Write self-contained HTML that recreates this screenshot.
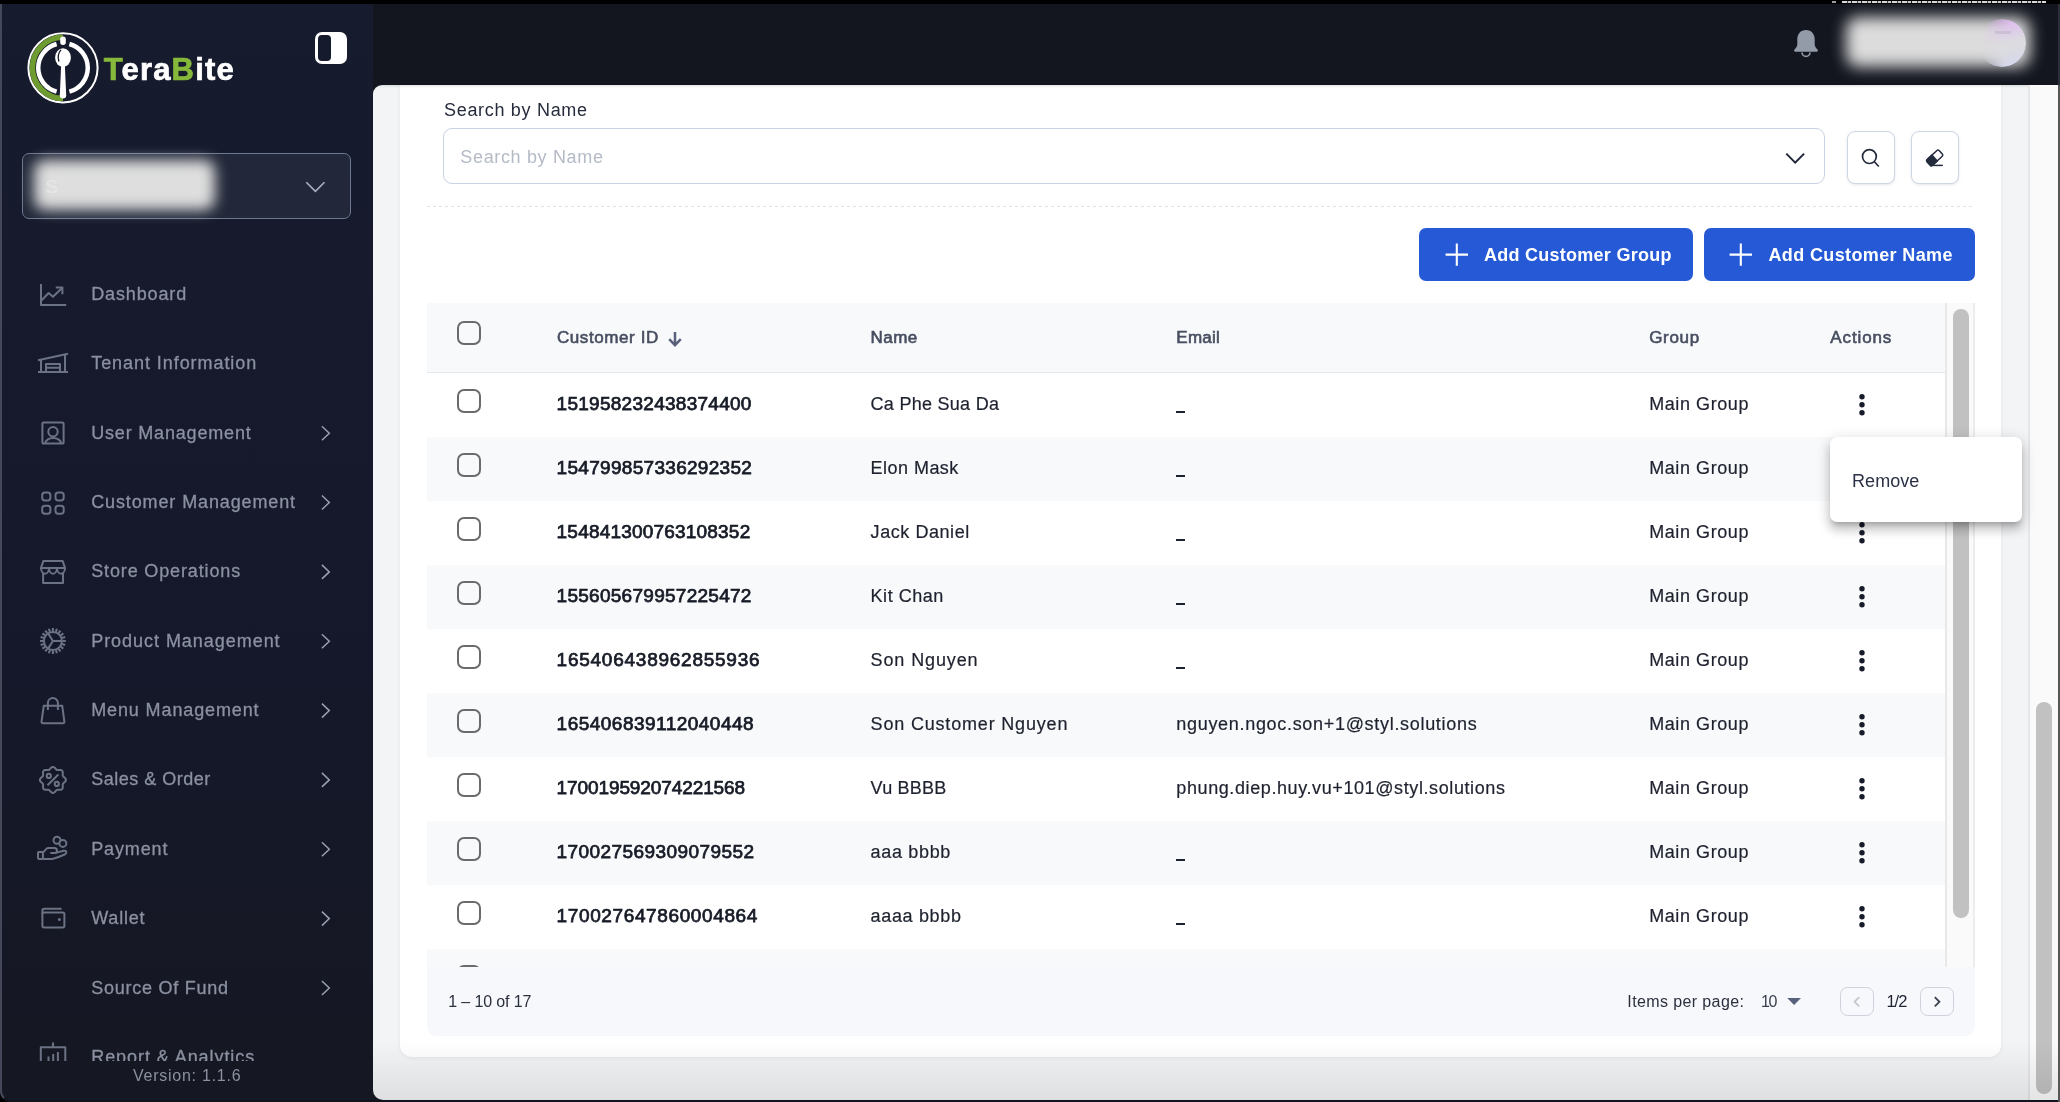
<!DOCTYPE html>
<html lang="en">
<head>
<meta charset="utf-8">
<title>TeraBite - Customer Management</title>
<style>
*{box-sizing:border-box;margin:0;padding:0}
html,body{width:2060px;height:1102px;overflow:hidden;background:#000}
body{font-family:"Liberation Sans",sans-serif;position:relative;color:#1c2233;font-size:16px;line-height:20px}
.a{position:absolute;display:block}
.t{position:absolute;display:block;white-space:nowrap;overflow:visible}
svg{overflow:visible}
#root{position:absolute;left:0;top:0;width:2060px;height:1102px;will-change:transform}

</style>
</head>
<body>
<div id="root">
<div class="a" style="left:0px;top:4px;width:2060px;height:1098px;background:#13161f;border-radius:0 0 0 11px;"></div>
<div class="a" style="left:0px;top:4px;width:373px;height:1098px;background:linear-gradient(to bottom,#161b2e 0%,#161a2c 25%,#15182a 60%,#151722 100%);border-radius:0 0 0 11px;"></div>
<svg class="a" style="left:24px;top:28px;" width="80" height="80" viewBox="24 28 80 80">
<circle cx="63" cy="67.8" r="34.6" fill="none" stroke="#fff" stroke-width="2"/>
<path d="M63 37.2 A30.6 30.6 0 0 0 63 98.4" fill="none" stroke="#6f9c30" stroke-width="5.6"/>
<path d="M56.6 44.0 A24.6 24.6 0 0 0 56.6 91.6" fill="none" stroke="#fff" stroke-width="4.5"/>
<path d="M69.4 44.0 A24.6 24.6 0 0 1 69.4 91.6" fill="none" stroke="#fff" stroke-width="4.5"/>
<rect x="60.2" y="36.6" width="5.6" height="8.3" rx="2.7" fill="#fff"/>
<ellipse cx="63" cy="57.6" rx="7.9" ry="9.4" fill="#fff"/>
<path d="M61.2 64 L59.8 95.2 Q59.8 98.4 63 98.4 Q66.2 98.4 66.2 95.2 L64.8 64 Z" fill="#fff"/>
<path d="M60.8 50.2 Q57 54.6 58.8 61" fill="none" stroke="#161a2d" stroke-width="1.3" stroke-linecap="round"/>
</svg>
<div class="t" style="left:103.7px;top:50.3px;font-size:31px;line-height:39px;height:39px;font-weight:700;letter-spacing:1.18px;color:#fff;-webkit-text-stroke:0.7px currentColor"><span style="color:#86b83a;-webkit-text-stroke:0.7px #86b83a">T</span>era<span style="color:#86b83a;-webkit-text-stroke:0.7px #86b83a">B</span>ite</div>
<div class="a" style="left:315px;top:32px;width:32px;height:32px;background:#fff;border-radius:7px;"></div>
<div class="a" style="left:318.3px;top:35.2px;width:12.7px;height:25.6px;background:#161a2d;border-radius:4px;"></div>
<div class="a" style="left:22px;top:153px;width:329px;height:65.5px;background:#222839;border:1px solid #6c7890;border-radius:7px;"></div>
<div class="a" style="left:33.5px;top:159.5px;width:181px;height:50px;background:#dedede;border-radius:11px;filter:blur(7px);"></div>
<div class="t" style="left:45.5px;top:174.8px;font-size:19px;line-height:24px;height:24px;color:#e7e7e7;filter:blur(.5px);">S</div>
<svg class="a" style="left:300px;top:176px;" width="30" height="22" viewBox="300 176 30 22"><path d="M306.3 182.3 L315.4 191.4 L324.5 182.3" fill="none" stroke="#a9b0bf" stroke-width="1.6"/></svg>
<div class="a" style="left:0;top:0;width:373px;height:1060.6px;overflow:hidden"><div class="t" style="left:91.2px;top:283.0px;font-size:18px;line-height:22px;height:22px;color:#8b91a1;letter-spacing:0.87px;-webkit-text-stroke:0.3px #8b91a1;">Dashboard</div><div class="t" style="left:91.2px;top:352.4px;font-size:18px;line-height:22px;height:22px;color:#8b91a1;letter-spacing:0.94px;-webkit-text-stroke:0.3px #8b91a1;">Tenant Information</div><div class="t" style="left:91.2px;top:421.7px;font-size:18px;line-height:22px;height:22px;color:#8b91a1;letter-spacing:0.82px;-webkit-text-stroke:0.3px #8b91a1;">User Management</div><div class="t" style="left:91.2px;top:491.0px;font-size:18px;line-height:22px;height:22px;color:#8b91a1;letter-spacing:0.88px;-webkit-text-stroke:0.3px #8b91a1;">Customer Management</div><div class="t" style="left:91.2px;top:560.4px;font-size:18px;line-height:22px;height:22px;color:#8b91a1;letter-spacing:0.86px;-webkit-text-stroke:0.3px #8b91a1;">Store Operations</div><div class="t" style="left:91.2px;top:629.8px;font-size:18px;line-height:22px;height:22px;color:#8b91a1;letter-spacing:0.96px;-webkit-text-stroke:0.3px #8b91a1;">Product Management</div><div class="t" style="left:91.2px;top:699.1px;font-size:18px;line-height:22px;height:22px;color:#8b91a1;letter-spacing:0.88px;-webkit-text-stroke:0.3px #8b91a1;">Menu Management</div><div class="t" style="left:91.2px;top:768.4px;font-size:18px;line-height:22px;height:22px;color:#8b91a1;letter-spacing:0.50px;-webkit-text-stroke:0.3px #8b91a1;">Sales &amp; Order</div><div class="t" style="left:91.2px;top:837.8px;font-size:18px;line-height:22px;height:22px;color:#8b91a1;letter-spacing:0.88px;-webkit-text-stroke:0.3px #8b91a1;">Payment</div><div class="t" style="left:91.2px;top:907.1px;font-size:18px;line-height:22px;height:22px;color:#8b91a1;letter-spacing:0.81px;-webkit-text-stroke:0.3px #8b91a1;">Wallet</div><div class="t" style="left:91.2px;top:976.5px;font-size:18px;line-height:22px;height:22px;color:#8b91a1;letter-spacing:0.76px;-webkit-text-stroke:0.3px #8b91a1;">Source Of Fund</div><div class="t" style="left:91.2px;top:1045.8px;font-size:18px;line-height:22px;height:22px;color:#8b91a1;letter-spacing:0.94px;-webkit-text-stroke:0.3px #8b91a1;">Report &amp; Analytics</div><svg class="a" style="left:0px;top:240px;" width="373" height="821" viewBox="0 240 373 821">
<g fill="none" stroke="#6b7284" stroke-width="2" stroke-linejoin="round">
<!-- dashboard -->
<path d="M41 284 V305 H66.2"/><path d="M41.6 300.4 L48.6 293 L53 296.7 L61.8 288.2"/><path d="M55.8 287.6 H62.4 V294.2"/>
<!-- tenant -->
<path d="M38 360.2 L68 353.7"/><path d="M41 359.6 V372 M65 354.4 V372 M38 372 H68"/><path d="M46 372 V364 H60 V372 M46 367.8 H60"/>
<!-- user -->
<rect x="42.4" y="422.4" width="21.2" height="21.2" rx="1.2"/><circle cx="53" cy="431.8" r="4.7"/><path d="M45.2 443.6 A7.95 5.6 0 0 1 61.1 443.6"/>
<!-- grid -->
<rect x="42.2" y="492.5" width="8.2" height="8" rx="2.7"/><rect x="55.5" y="492.5" width="8.2" height="8" rx="2.7"/>
<rect x="42.2" y="505.7" width="8.2" height="8" rx="2.7"/><rect x="55.5" y="505.7" width="8.2" height="8" rx="2.7"/>
<!-- store -->
<path d="M43.4 560.9 H62.6 L65 567.9 H41 Z"/>
<path d="M41 568 a4 5.7 0 0 0 8 0 a4 5.7 0 0 0 8 0 a4 5.7 0 0 0 8 0"/>
<path d="M43.1 572.6 V583 H63 V572.6"/>
<!-- gear -->
<circle cx="52.9" cy="641" r="9"/><path d="M62.50 641.00 L65.80 641.00 M62.03 643.97 L65.17 644.99 M60.67 646.64 L63.34 648.58 M58.54 648.77 L60.48 651.44 M55.87 650.13 L56.89 653.27 M52.90 650.60 L52.90 653.90 M49.93 650.13 L48.91 653.27 M47.26 648.77 L45.32 651.44 M45.13 646.64 L42.46 648.58 M43.77 643.97 L40.63 644.99 M43.30 641.00 L40.00 641.00 M43.77 638.03 L40.63 637.01 M45.13 635.36 L42.46 633.42 M47.26 633.23 L45.32 630.56 M49.93 631.87 L48.91 628.73 M52.90 631.40 L52.90 628.10 M55.87 631.87 L56.89 628.73 M58.54 633.23 L60.48 630.56 M60.67 635.36 L63.34 633.42 M62.03 638.03 L65.17 637.01 " stroke-width="2.1"/>
<path d="M52.9 641 H61.9 M52.9 641 L48.1 633.4 M52.9 641 L48.1 648.6"/>
<!-- bag -->
<path d="M43.8 705.7 H62.2 L64.4 721.8 a1.4 1.4 0 0 1 -1.4 1.5 H42.9 a1.4 1.4 0 0 1 -1.4 -1.5 Z"/>
<path d="M47.9 710 V703 a5 5 0 0 1 10 0 V710"/>
<!-- sales -->
<polygon points="52.90,766.85 54.01,767.17 55.00,767.98 55.83,768.96 56.60,769.73 57.47,770.09 58.56,770.09 59.84,769.99 61.12,770.11 62.13,770.67 62.69,771.68 62.81,772.96 62.71,774.24 62.71,775.33 63.07,776.20 63.84,776.97 64.82,777.80 65.63,778.79 65.95,779.90 65.63,781.01 64.82,782.00 63.84,782.83 63.07,783.60 62.71,784.47 62.71,785.56 62.81,786.84 62.69,788.12 62.13,789.13 61.12,789.69 59.84,789.81 58.56,789.71 57.47,789.71 56.60,790.07 55.83,790.84 55.00,791.82 54.01,792.63 52.90,792.95 51.79,792.63 50.80,791.82 49.97,790.84 49.20,790.07 48.33,789.71 47.24,789.71 45.96,789.81 44.68,789.69 43.67,789.13 43.11,788.12 42.99,786.84 43.09,785.56 43.09,784.47 42.73,783.60 41.96,782.83 40.98,782.00 40.17,781.01 39.85,779.90 40.17,778.79 40.98,777.80 41.96,776.97 42.73,776.20 43.09,775.33 43.09,774.24 42.99,772.96 43.11,771.68 43.67,770.67 44.68,770.11 45.96,769.99 47.24,770.09 48.33,770.09 49.20,769.73 49.97,768.96 50.80,767.98 51.79,767.17"/><path d="M47.5 785.3 L58.4 774.5"/><circle cx="48.8" cy="775.9" r="2.1"/><circle cx="56.8" cy="783.9" r="2.1"/>
<!-- payment -->
<rect x="38" y="852.1" width="4.9" height="6.8" rx="0.8"/>
<path d="M42.9 852.6 L46.6 848.6 Q47.3 847.9 48.5 847.9 H54.4 Q57 848 57 850.4 Q57 853 54.6 853 H50.3"/>
<path d="M56.6 852.6 L63.6 850.7 Q66 850.3 66.3 852.2 Q66.4 853.6 64.6 854.5 Q57.6 857.8 52.3 858.9 H42.9"/>
<circle cx="57" cy="840.3" r="3.5"/><circle cx="62.85" cy="843.4" r="3.5" fill="#151826"/>
<!-- wallet -->
<rect x="42.4" y="912.5" width="22" height="14.9" rx="1.6"/><path d="M42.4 914 V910.5 a1.8 1.8 0 0 1 1.8 -1.8 H61.6"/>
<circle cx="59.4" cy="919.6" r="1.5" fill="#6b7284" stroke="none"/>
<!-- report -->
<path d="M40.8 1062 V1047.3 H65.3 V1062 M53 1042.6 V1047.3"/>
<path d="M48.5 1062 V1056.6 M53.2 1062 V1054 M57.9 1062 V1052" stroke-width="2"/>
</g>
<g fill="none" stroke="#98a0af" stroke-width="1.5"><path d="M321.9 426.2 L329.3 433.2 L321.9 440.2" /><path d="M321.9 495.5 L329.3 502.5 L321.9 509.5" /><path d="M321.9 564.9 L329.3 571.9 L321.9 578.9" /><path d="M321.9 634.2 L329.3 641.2 L321.9 648.2" /><path d="M321.9 703.6 L329.3 710.6 L321.9 717.6" /><path d="M321.9 772.9 L329.3 779.9 L321.9 786.9" /><path d="M321.9 842.3 L329.3 849.3 L321.9 856.3" /><path d="M321.9 911.6 L329.3 918.6 L321.9 925.6" /><path d="M321.9 981.0 L329.3 988.0 L321.9 995.0" /></g>
</svg></div>
<div class="t" style="left:133.0px;top:1065.6px;font-size:16px;line-height:20px;height:20px;color:#8b91a1;letter-spacing:0.75px;">Version: 1.1.6</div>
<svg class="a" style="left:1790px;top:26px;" width="32" height="34" viewBox="1790 26 32 34"><path d="M1806 30 c-5.6 0 -8.7 4.3 -8.7 9.3 v5.2 c0 1.9 -1.2 3.3 -2.6 4.7 c-1.2 1.2 -0.6 2.6 0.8 2.6 h21 c1.4 0 2 -1.4 0.8 -2.6 c-1.4 -1.4 -2.6 -2.8 -2.6 -4.7 v-5.2 c0 -5 -3.1 -9.3 -8.7 -9.3 z" fill="#939aa8"/>
<path d="M1802 52.4 a4 4 0 0 0 8 0" fill="none" stroke="#939aa8" stroke-width="1.7"/></svg>
<div class="a" style="left:1846px;top:16.5px;width:184px;height:50.5px;background:#dcdcdc;border-radius:12px;filter:blur(7.5px);"></div>
<div class="a" style="left:1978.4px;top:18.9px;width:48px;height:48px;border-radius:50%;background:linear-gradient(165deg,#e3aaf3 0%,#dfc6ec 28%,#dcdce0 52%,#dadae3 72%,#d3d6f0 100%);-webkit-mask-image:linear-gradient(100deg,rgba(0,0,0,0) 12%,rgba(0,0,0,1) 62%);mask-image:linear-gradient(100deg,rgba(0,0,0,0) 12%,rgba(0,0,0,1) 62%)"></div>
<div class="a" style="left:1995px;top:30.5px;width:16px;height:3.5px;background:rgba(120,120,125,.16);filter:blur(.6px);"></div>
<div class="a" style="left:1842px;top:1px;width:204px;height:2.4px;background:repeating-linear-gradient(to right,#fff 0,#fff 5px,#555 5px,#555 6px,#eee 6px,#eee 9px,#222 9px,#222 10px);opacity:.85;"></div>
<div class="a" style="left:1832px;top:0.5px;width:4px;height:2.5px;background:#ddd;opacity:.7;"></div>
<div class="a" style="left:373px;top:85px;width:1685px;height:1015px;background:#f3f4f6;border-radius:9px 0 0 10px;"></div>
<div class="a" style="left:2028px;top:85px;width:30px;height:1015px;background:#fafafa;border-left:2px solid #e6e6e6;"></div>
<div class="a" style="left:2036px;top:702px;width:16px;height:392.2px;background:#c1c1c1;border-radius:8px;"></div>
<div class="a" style="left:400px;top:85px;width:1601px;height:972px;background:#fff;border-radius:0 0 12px 12px;box-shadow:0 1px 4px rgba(30,40,70,.07);"></div>
<div class="a" style="left:373px;top:85px;width:1655px;height:3px;background:linear-gradient(to bottom,rgba(0,0,0,.10),rgba(0,0,0,0));border-radius:9px 0 0 0;"></div>
<div class="t" style="left:444.0px;top:98.6px;font-size:18px;line-height:22px;height:22px;color:#262c3c;letter-spacing:0.69px;">Search by Name</div>
<div class="a" style="left:443px;top:128px;width:1382px;height:55.5px;border:1px solid #c9d1e2;border-radius:9px;background:#fff;"></div>
<div class="t" style="left:460.3px;top:146.0px;font-size:18px;line-height:22px;height:22px;color:#b4bbc7;letter-spacing:0.66px;">Search by Name</div>
<svg class="a" style="left:1780px;top:148px;" width="30" height="20" viewBox="1780 148 30 20"><path d="M1786.3 153.6 L1795.2 162.6 L1804.1 153.6" fill="none" stroke="#1f2738" stroke-width="2"/></svg>
<div class="a" style="left:1847.4px;top:131px;width:47.2px;height:52.5px;border:1px solid #cfd6e4;border-radius:8px;background:#fff;box-shadow:0 1px 3px rgba(40,60,110,.13);"></div>
<div class="a" style="left:1911.3px;top:131px;width:47.3px;height:52.5px;border:1px solid #cfd6e4;border-radius:8px;background:#fff;box-shadow:0 1px 3px rgba(40,60,110,.13);"></div>
<svg class="a" style="left:1858px;top:146px;" width="26" height="26" viewBox="1858 146 26 26"><circle cx="1869.4" cy="156.6" r="6.9" fill="none" stroke="#232b3d" stroke-width="1.7"/><path d="M1874.4 161.7 L1878.8 166.5" stroke="#232b3d" stroke-width="1.7" fill="none"/></svg>
<svg class="a" style="left:1922px;top:146px;" width="26" height="26" viewBox="1922 146 26 26"><g transform="translate(1934.7,157.9) rotate(-43)"><rect x="-8.2" y="-3.9" width="16.4" height="7.8" rx="1.5" fill="#fff" stroke="#232b3d" stroke-width="1.5"/><path d="M-8.2 -2.4 a1.5 1.5 0 0 1 1.5 -1.5 H-0.2 V3.9 H-6.7 a1.5 1.5 0 0 1 -1.5 -1.5 Z" fill="#232b3d" stroke="#232b3d" stroke-width="1.5"/></g>
<path d="M1930.6 165.4 H1942.8" stroke="#232b3d" stroke-width="1.5" fill="none"/></svg>
<div class="a" style="left:427px;top:205.5px;width:1548px;height:1px;background:repeating-linear-gradient(to right,#dfe1e8 0,#dfe1e8 3px,transparent 3px,transparent 6px);"></div>
<div class="a" style="left:1419px;top:228px;width:274px;height:53px;background:#2659d6;border-radius:7px;"></div>
<div class="a" style="left:1704px;top:228px;width:271px;height:53px;background:#2659d6;border-radius:7px;"></div>
<svg class="a" style="left:1440px;top:240px;" width="320" height="30" viewBox="1440 240 320 30"><path d="M1445.6 254.6 H1468 M1456.8 243.4 V265.8 M1729.6 254.6 H1752 M1740.8 243.4 V265.8" stroke="#fff" stroke-width="2.1" fill="none"/></svg>
<div class="t" style="left:1483.9px;top:244.2px;font-size:18px;line-height:22px;height:22px;color:#fff;font-weight:700;letter-spacing:0.27px;">Add Customer Group</div>
<div class="t" style="left:1768.5px;top:244.2px;font-size:18px;line-height:22px;height:22px;color:#fff;font-weight:700;letter-spacing:0.37px;">Add Customer Name</div>
<div class="a" style="left:427px;top:303px;width:1548px;height:69px;background:#f8f9fb;"></div>
<div class="a" style="left:427px;top:372px;width:1518px;height:1px;background:#e3e7ee;"></div>
<div class="t" style="left:556.9px;top:327.0px;font-size:17px;line-height:21px;height:21px;color:#474e60;letter-spacing:0.60px;-webkit-text-stroke:0.6px #474e60;">Customer ID</div>
<svg class="a" style="left:664px;top:328px;" width="22" height="22" viewBox="664 328 22 22"><path d="M675 332 V344.6 M669.2 339.2 L675 345.1 L680.8 339.2" fill="none" stroke="#58627c" stroke-width="2.5"/></svg>
<div class="t" style="left:870.6px;top:327.0px;font-size:17px;line-height:21px;height:21px;color:#474e60;letter-spacing:0.41px;-webkit-text-stroke:0.6px #474e60;">Name</div>
<div class="t" style="left:1176.3px;top:327.0px;font-size:17px;line-height:21px;height:21px;color:#474e60;letter-spacing:0.25px;-webkit-text-stroke:0.6px #474e60;">Email</div>
<div class="t" style="left:1649.2px;top:327.0px;font-size:17px;line-height:21px;height:21px;color:#474e60;letter-spacing:0.69px;-webkit-text-stroke:0.6px #474e60;">Group</div>
<div class="t" style="left:1830.3px;top:327.0px;font-size:17px;line-height:21px;height:21px;color:#474e60;letter-spacing:0.88px;-webkit-text-stroke:0.6px #474e60;">Actions</div>
<div class="a" style="left:457.1px;top:320.9px;width:24px;height:24px;border:2.1px solid #6a6b6b;border-radius:7px;"></div>
<div class="a" style="left:0;top:0;width:1975px;height:967px;overflow:hidden"><div class="a" style="left:457.1px;top:389px;width:24px;height:24px;border:2.1px solid #6a6b6b;border-radius:7px;"></div><div class="t" style="left:556.6px;top:392.4px;font-size:19px;line-height:24px;height:24px;color:#171b26;letter-spacing:0.27px;-webkit-text-stroke:0.75px #171b26;">151958232438374400</div><div class="t" style="left:870.6px;top:393.2px;font-size:18px;line-height:22px;height:22px;color:#1e222e;letter-spacing:0.27px;-webkit-text-stroke:0.2px #1e222e;">Ca Phe Sua Da</div><div class="a" style="left:1176.2px;top:411.3px;width:8.8px;height:1.8px;background:#1e222e;"></div><div class="t" style="left:1649.2px;top:393.2px;font-size:18px;line-height:22px;height:22px;color:#1e222e;letter-spacing:0.58px;-webkit-text-stroke:0.2px #1e222e;">Main Group</div><div class="a" style="left:427px;top:437px;width:1518px;height:64px;background:#f8f9fb;"></div><div class="a" style="left:457.1px;top:453px;width:24px;height:24px;border:2.1px solid #6a6b6b;border-radius:7px;"></div><div class="t" style="left:556.6px;top:456.4px;font-size:19px;line-height:24px;height:24px;color:#171b26;letter-spacing:0.30px;-webkit-text-stroke:0.75px #171b26;">154799857336292352</div><div class="t" style="left:870.6px;top:457.2px;font-size:18px;line-height:22px;height:22px;color:#1e222e;letter-spacing:0.46px;-webkit-text-stroke:0.2px #1e222e;">Elon Mask</div><div class="a" style="left:1176.2px;top:475.3px;width:8.8px;height:1.8px;background:#1e222e;"></div><div class="t" style="left:1649.2px;top:457.2px;font-size:18px;line-height:22px;height:22px;color:#1e222e;letter-spacing:0.58px;-webkit-text-stroke:0.2px #1e222e;">Main Group</div><div class="a" style="left:457.1px;top:517px;width:24px;height:24px;border:2.1px solid #6a6b6b;border-radius:7px;"></div><div class="t" style="left:556.6px;top:520.4px;font-size:19px;line-height:24px;height:24px;color:#171b26;letter-spacing:0.20px;-webkit-text-stroke:0.75px #171b26;">154841300763108352</div><div class="t" style="left:870.6px;top:521.2px;font-size:18px;line-height:22px;height:22px;color:#1e222e;letter-spacing:0.56px;-webkit-text-stroke:0.2px #1e222e;">Jack Daniel</div><div class="a" style="left:1176.2px;top:539.3px;width:8.8px;height:1.8px;background:#1e222e;"></div><div class="t" style="left:1649.2px;top:521.2px;font-size:18px;line-height:22px;height:22px;color:#1e222e;letter-spacing:0.58px;-webkit-text-stroke:0.2px #1e222e;">Main Group</div><div class="a" style="left:427px;top:565px;width:1518px;height:64px;background:#f8f9fb;"></div><div class="a" style="left:457.1px;top:581px;width:24px;height:24px;border:2.1px solid #6a6b6b;border-radius:7px;"></div><div class="t" style="left:556.6px;top:584.4px;font-size:19px;line-height:24px;height:24px;color:#171b26;letter-spacing:0.27px;-webkit-text-stroke:0.75px #171b26;">155605679957225472</div><div class="t" style="left:870.6px;top:585.2px;font-size:18px;line-height:22px;height:22px;color:#1e222e;letter-spacing:0.52px;-webkit-text-stroke:0.2px #1e222e;">Kit Chan</div><div class="a" style="left:1176.2px;top:603.3px;width:8.8px;height:1.8px;background:#1e222e;"></div><div class="t" style="left:1649.2px;top:585.2px;font-size:18px;line-height:22px;height:22px;color:#1e222e;letter-spacing:0.58px;-webkit-text-stroke:0.2px #1e222e;">Main Group</div><div class="a" style="left:457.1px;top:645px;width:24px;height:24px;border:2.1px solid #6a6b6b;border-radius:7px;"></div><div class="t" style="left:556.6px;top:648.4px;font-size:19px;line-height:24px;height:24px;color:#171b26;letter-spacing:0.75px;-webkit-text-stroke:0.75px #171b26;">165406438962855936</div><div class="t" style="left:870.6px;top:649.2px;font-size:18px;line-height:22px;height:22px;color:#1e222e;letter-spacing:0.88px;-webkit-text-stroke:0.2px #1e222e;">Son Nguyen</div><div class="a" style="left:1176.2px;top:667.3px;width:8.8px;height:1.8px;background:#1e222e;"></div><div class="t" style="left:1649.2px;top:649.2px;font-size:18px;line-height:22px;height:22px;color:#1e222e;letter-spacing:0.58px;-webkit-text-stroke:0.2px #1e222e;">Main Group</div><div class="a" style="left:427px;top:693px;width:1518px;height:64px;background:#f8f9fb;"></div><div class="a" style="left:457.1px;top:709px;width:24px;height:24px;border:2.1px solid #6a6b6b;border-radius:7px;"></div><div class="t" style="left:556.6px;top:712.4px;font-size:19px;line-height:24px;height:24px;color:#171b26;letter-spacing:0.48px;-webkit-text-stroke:0.75px #171b26;">165406839112040448</div><div class="t" style="left:870.6px;top:713.2px;font-size:18px;line-height:22px;height:22px;color:#1e222e;letter-spacing:0.82px;-webkit-text-stroke:0.2px #1e222e;">Son Customer Nguyen</div><div class="t" style="left:1176.3px;top:713.2px;font-size:18px;line-height:22px;height:22px;color:#1e222e;letter-spacing:0.69px;-webkit-text-stroke:0.2px #1e222e;">nguyen.ngoc.son+1@styl.solutions</div><div class="t" style="left:1649.2px;top:713.2px;font-size:18px;line-height:22px;height:22px;color:#1e222e;letter-spacing:0.58px;-webkit-text-stroke:0.2px #1e222e;">Main Group</div><div class="a" style="left:457.1px;top:773px;width:24px;height:24px;border:2.1px solid #6a6b6b;border-radius:7px;"></div><div class="t" style="left:556.6px;top:776.4px;font-size:19px;line-height:24px;height:24px;color:#171b26;letter-spacing:-0.10px;-webkit-text-stroke:0.75px #171b26;">170019592074221568</div><div class="t" style="left:870.6px;top:777.2px;font-size:18px;line-height:22px;height:22px;color:#1e222e;letter-spacing:0.22px;-webkit-text-stroke:0.2px #1e222e;">Vu BBBB</div><div class="t" style="left:1176.3px;top:777.2px;font-size:18px;line-height:22px;height:22px;color:#1e222e;letter-spacing:0.60px;-webkit-text-stroke:0.2px #1e222e;">phung.diep.huy.vu+101@styl.solutions</div><div class="t" style="left:1649.2px;top:777.2px;font-size:18px;line-height:22px;height:22px;color:#1e222e;letter-spacing:0.58px;-webkit-text-stroke:0.2px #1e222e;">Main Group</div><div class="a" style="left:427px;top:821px;width:1518px;height:64px;background:#f8f9fb;"></div><div class="a" style="left:457.1px;top:837px;width:24px;height:24px;border:2.1px solid #6a6b6b;border-radius:7px;"></div><div class="t" style="left:556.6px;top:840.4px;font-size:19px;line-height:24px;height:24px;color:#171b26;letter-spacing:0.43px;-webkit-text-stroke:0.75px #171b26;">170027569309079552</div><div class="t" style="left:870.6px;top:841.2px;font-size:18px;line-height:22px;height:22px;color:#1e222e;letter-spacing:0.67px;-webkit-text-stroke:0.2px #1e222e;">aaa bbbb</div><div class="a" style="left:1176.2px;top:859.3px;width:8.8px;height:1.8px;background:#1e222e;"></div><div class="t" style="left:1649.2px;top:841.2px;font-size:18px;line-height:22px;height:22px;color:#1e222e;letter-spacing:0.58px;-webkit-text-stroke:0.2px #1e222e;">Main Group</div><div class="a" style="left:457.1px;top:901px;width:24px;height:24px;border:2.1px solid #6a6b6b;border-radius:7px;"></div><div class="t" style="left:556.6px;top:904.4px;font-size:19px;line-height:24px;height:24px;color:#171b26;letter-spacing:0.62px;-webkit-text-stroke:0.75px #171b26;">170027647860004864</div><div class="t" style="left:870.6px;top:905.2px;font-size:18px;line-height:22px;height:22px;color:#1e222e;letter-spacing:0.66px;-webkit-text-stroke:0.2px #1e222e;">aaaa bbbb</div><div class="a" style="left:1176.2px;top:923.3px;width:8.8px;height:1.8px;background:#1e222e;"></div><div class="t" style="left:1649.2px;top:905.2px;font-size:18px;line-height:22px;height:22px;color:#1e222e;letter-spacing:0.58px;-webkit-text-stroke:0.2px #1e222e;">Main Group</div><div class="a" style="left:427px;top:949px;width:1518px;height:64px;background:#f8f9fb;"></div><div class="a" style="left:457.1px;top:965px;width:24px;height:24px;border:2.1px solid #6a6b6b;border-radius:7px;"></div><svg class="a" style="left:1850px;top:372px;" width="25" height="595" viewBox="1850 372 25 595"><g fill="#171c2a"><circle cx="1862" cy="396.8" r="2.7"/><circle cx="1862" cy="404.8" r="2.7"/><circle cx="1862" cy="412.8" r="2.7"/><circle cx="1862" cy="460.8" r="2.7"/><circle cx="1862" cy="468.8" r="2.7"/><circle cx="1862" cy="476.8" r="2.7"/><circle cx="1862" cy="524.8" r="2.7"/><circle cx="1862" cy="532.8" r="2.7"/><circle cx="1862" cy="540.8" r="2.7"/><circle cx="1862" cy="588.8" r="2.7"/><circle cx="1862" cy="596.8" r="2.7"/><circle cx="1862" cy="604.8" r="2.7"/><circle cx="1862" cy="652.8" r="2.7"/><circle cx="1862" cy="660.8" r="2.7"/><circle cx="1862" cy="668.8" r="2.7"/><circle cx="1862" cy="716.8" r="2.7"/><circle cx="1862" cy="724.8" r="2.7"/><circle cx="1862" cy="732.8" r="2.7"/><circle cx="1862" cy="780.8" r="2.7"/><circle cx="1862" cy="788.8" r="2.7"/><circle cx="1862" cy="796.8" r="2.7"/><circle cx="1862" cy="844.8" r="2.7"/><circle cx="1862" cy="852.8" r="2.7"/><circle cx="1862" cy="860.8" r="2.7"/><circle cx="1862" cy="908.8" r="2.7"/><circle cx="1862" cy="916.8" r="2.7"/><circle cx="1862" cy="924.8" r="2.7"/></g></svg></div>
<div class="a" style="left:1945px;top:303px;width:30px;height:664px;background:#fafafa;border-left:2px solid #e8e8e8;border-right:2px solid #ededed;"></div>
<div class="a" style="left:1953px;top:308.7px;width:16px;height:609.3px;background:#c1c1c1;border-radius:8px;"></div>
<div class="a" style="left:427px;top:967px;width:1548px;height:69px;background:#f7f8fb;border-radius:0 0 9px 9px;"></div>
<div class="t" style="left:448.2px;top:991.8px;font-size:16px;line-height:20px;height:20px;color:#2b303e;letter-spacing:-0.12px;">1 – 10 of 17</div>
<div class="t" style="left:1627.3px;top:992.0px;font-size:16px;line-height:20px;height:20px;color:#2b303e;letter-spacing:0.39px;">Items per page:</div>
<div class="t" style="left:1761.0px;top:992.0px;font-size:16px;line-height:20px;height:20px;color:#3a4050;letter-spacing:-1.50px;">10</div>
<svg class="a" style="left:1785px;top:995px;" width="18" height="13" viewBox="1785 995 18 13"><path d="M1787.2 998 H1801 L1794.1 1005 Z" fill="#58627c"/></svg>
<div class="a" style="left:1840px;top:987px;width:34px;height:29px;border:1px solid #cdd2dd;border-radius:7.5px;"></div>
<div class="a" style="left:1920px;top:987px;width:34px;height:29px;border:1px solid #cdd2dd;border-radius:7.5px;"></div>
<svg class="a" style="left:1845px;top:990px;" width="105" height="24" viewBox="1845 990 105 24"><path d="M1859.2 997.2 L1854.6 1001.8 L1859.2 1006.4" fill="none" stroke="#c3c7d0" stroke-width="1.8"/><path d="M1934.8 997.2 L1939.4 1001.8 L1934.8 1006.4" fill="none" stroke="#3a4050" stroke-width="1.8"/></svg>
<div class="t" style="left:1886.4px;top:991.3px;font-size:16.5px;line-height:21px;height:21px;color:#1f2433;letter-spacing:-0.97px;">1/2</div>
<div class="a" style="left:1830px;top:437px;width:192px;height:85px;background:#fff;border-radius:7px;box-shadow:0 5px 5px -3px rgba(0,0,0,.2),0 8px 10px 1px rgba(0,0,0,.14),0 3px 14px 2px rgba(0,0,0,.12);"></div>
<div class="t" style="left:1852.0px;top:470.2px;font-size:18px;line-height:22px;height:22px;color:#2a3045;letter-spacing:0.07px;">Remove</div>
<div class="a" style="left:373px;top:1040px;width:1685px;height:60px;background:linear-gradient(to bottom,rgba(0,0,0,0),rgba(0,0,0,.085));border-radius:0 0 0 10px;"></div>
<div class="a" style="left:0px;top:4px;width:2060px;height:1098px;border-left:2px solid #454859;border-bottom:2px solid #12141d;border-radius:0 0 0 11px;"></div>
<div class="a" style="left:2058px;top:4px;width:2px;height:81px;background:#2c2f39;"></div>
<div class="a" style="left:2058px;top:85px;width:2px;height:1017px;background:#575757;"></div>
</div>
</body>
</html>
